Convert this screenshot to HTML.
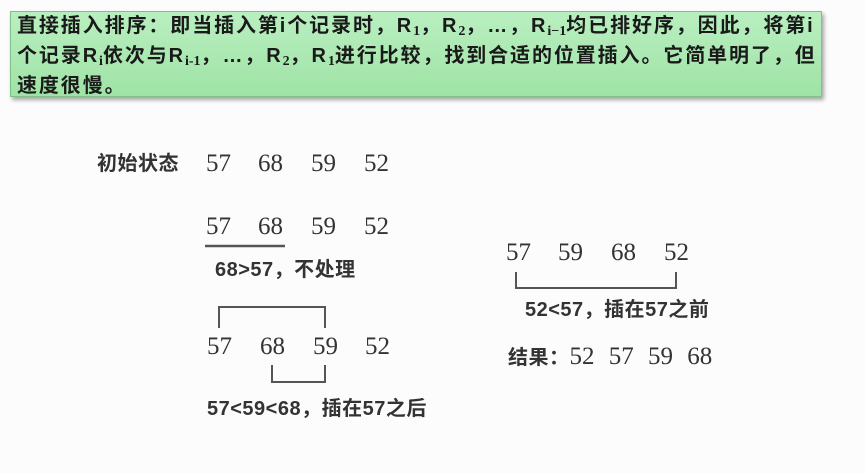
<!DOCTYPE html>
<html><head><meta charset="utf-8"><style>
body{margin:0;width:865px;height:473px;background:#fcfcfc;position:relative;overflow:hidden;font-family:"Liberation Sans","Noto Sans CJK SC",sans-serif;color:#222}
.box{position:absolute;left:10px;top:11px;width:812px;height:86px;background:linear-gradient(#b9efc0,#9fe3a6);border:1px solid #7fbf88;box-shadow:2px 3px 4px rgba(0,0,0,.35);box-sizing:border-box}
.box p{margin:0;position:absolute;left:6px;top:2px;font-weight:bold;font-size:20px;line-height:24px;color:#1a1a1a;letter-spacing:1.9px;white-space:nowrap}
sub{font-size:14px;font-family:"Liberation Serif",serif;vertical-align:-3px;letter-spacing:0}
.n{position:absolute;font-family:"Liberation Serif",serif;font-size:25px;line-height:25px;color:#333}
.t{position:absolute;font-size:20px;line-height:22px;font-weight:bold;color:#333;white-space:nowrap;letter-spacing:0.5px}
svg{position:absolute;left:0;top:0}
</style></head><body>
<div class="box"><p>直接插入排序：即当插入第i个记录时，R<sub>1</sub>，R<sub>2</sub>，…，R<sub>i−1</sub>均已排好序，因此，将第i<br>个记录R<sub>i</sub>依次与R<sub>i-1</sub>，…，R<sub>2</sub>，R<sub>1</sub>进行比较，找到合适的位置插入。它简单明了，但<br>速度很慢。</p></div>

<div class="t" style="left:97px;top:153px">初始状态</div>
<div class="n" style="left:206px;top:151px">57</div><div class="n" style="left:258px;top:151px">68</div><div class="n" style="left:311px;top:151px">59</div><div class="n" style="left:364px;top:151px">52</div>

<div class="n" style="left:206px;top:214px">57</div><div class="n" style="left:258px;top:214px">68</div><div class="n" style="left:311px;top:214px">59</div><div class="n" style="left:364px;top:214px">52</div>
<div class="t" style="left:215px;top:259px">68&gt;57，不处理</div>

<div class="n" style="left:207px;top:334px">57</div><div class="n" style="left:260px;top:334px">68</div><div class="n" style="left:313px;top:334px">59</div><div class="n" style="left:365px;top:334px">52</div>
<div class="t" style="left:207px;top:398px">57&lt;59&lt;68，插在57之后</div>

<div class="n" style="left:506px;top:240px">57</div><div class="n" style="left:558px;top:240px">59</div><div class="n" style="left:611px;top:240px">68</div><div class="n" style="left:664px;top:240px">52</div>
<div class="t" style="left:525px;top:299px">52&lt;57，插在57之前</div>
<div class="t" style="left:508px;top:346px">结果：<span style="font-family:'Liberation Serif',serif;font-weight:normal;font-size:25px;word-spacing:8px;letter-spacing:0">52 57 59 68</span></div>

<svg width="865" height="473" fill="none" stroke="#555" stroke-width="2">
<path d="M205 246H285" stroke-width="2.5"/>
<path d="M219 328V307H325V328"/>
<path d="M272 365V382H325V365"/>
<path d="M516 272V288H676V272"/>
</svg>
</body></html>
